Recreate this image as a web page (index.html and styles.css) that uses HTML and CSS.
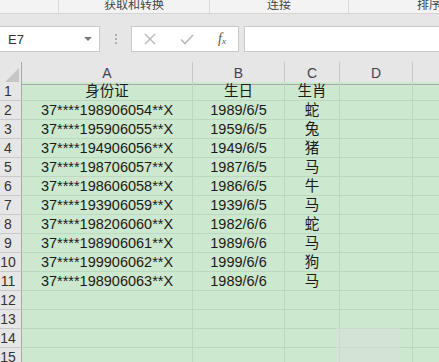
FILE: index.html
```html
<!DOCTYPE html>
<html lang="zh-CN">
<head>
    <meta charset="UTF-8">
    <title>身份证 - 生肖</title>
    <link rel="stylesheet" href="styles.css">
</head>
<body>
    <div class="ribbon">
        <div class="group g1"></div>
        <div class="group g2"><span>获取和转换</span></div>
        <div class="group g3"><span>连接</span></div>
        <div class="group g4"><span>排序</span></div>
    </div>

    <div class="formula-bar">
        <div class="name-box">
            <span>E7</span>
            <svg class="caret" width="8" height="5" viewBox="0 0 8 5"><path d="M0 0h8L4 4z" fill="#7a7a7a"/></svg>
        </div>
        <div class="grip">
            <i></i><i></i><i></i>
        </div>
        <div class="fx-box">
            <svg width="12" height="12" viewBox="0 0 12 12"><path d="M1 1L11 11M11 1L1 11" stroke="#b8b8b8" stroke-width="1.4" fill="none"/></svg>
            <svg width="14" height="11" viewBox="0 0 14 11"><path d="M1 5.5L5 9.5L13 1" stroke="#b8b8b8" stroke-width="1.6" fill="none"/></svg>
            <span class="fx">f<sub>x</sub></span>
        </div>
        <div class="formula-input"></div>
    </div>

    <div class="sheet" id="sheet">
        <div class="row head">
            <div class="corner"><svg width="14" height="14" viewBox="0 0 14 14"><path d="M14 0V14H0z" fill="#c6c6c6"/></svg></div>
            <div class="col">A</div>
            <div class="col">B</div>
            <div class="col">C</div>
            <div class="col">D</div>
            <div class="col"></div>
        </div>
    </div>

    <div class="watermark"></div>

    <script>
        const rows = [
            ["身份证", "生日", "生肖"],
            ["37****198906054**X", "1989/6/5", "蛇"],
            ["37****195906055**X", "1959/6/5", "兔"],
            ["37****194906056**X", "1949/6/5", "猪"],
            ["37****198706057**X", "1987/6/5", "马"],
            ["37****198606058**X", "1986/6/5", "牛"],
            ["37****193906059**X", "1939/6/5", "马"],
            ["37****198206060**X", "1982/6/6", "蛇"],
            ["37****198906061**X", "1989/6/6", "马"],
            ["37****199906062**X", "1999/6/6", "狗"],
            ["37****198906063**X", "1989/6/6", "马"],
            [], [], [], []
        ];

        const sheet = document.getElementById('sheet');
        rows.forEach((data, i) => {
            const row = document.createElement('div');
            row.className = 'row';
            const num = document.createElement('div');
            num.className = 'num';
            num.textContent = i + 1;
            row.appendChild(num);
            for (let c = 0; c < 5; c++) {
                const cell = document.createElement('div');
                cell.className = 'cell';
                cell.textContent = data[c] || '';
                row.appendChild(cell);
            }
            sheet.appendChild(row);
        });
    </script>
</body>
</html>
```

FILE: styles.css
```css
body {
    margin: 0;
    width: 439px;
    height: 362px;
    overflow: hidden;
    background-color: #e6e6e6;
    font-family: 'Liberation Sans', 'Noto Sans CJK SC', sans-serif;
    position: relative;
}

.ribbon {
    display: flex;
    height: 14px;
    background-color: #f3f3f3;
    border-bottom: 1px solid #d6d6d6;
    box-sizing: border-box;
    overflow: hidden;
}

.group {
    border-right: 1px solid #d9d9d9;
    text-align: center;
    flex-shrink: 0;
}

.group span {
    display: block;
    margin-top: -4px;
    font-family: 'Noto Sans CJK SC', sans-serif;
    font-size: 12px;
    line-height: 16px;
    color: #444;
}

.g1 { width: 58px; }
.g2 { width: 150px; }
.g3 { width: 138px; }
.g4 { width: 160px; text-align: left; padding-left: 68px; }

.formula-bar {
    display: flex;
    align-items: flex-start;
    height: 48px;
    padding-top: 12px;
    box-sizing: border-box;
}

.name-box,
.fx-box,
.formula-input {
    height: 26px;
    background-color: #fff;
    border: 1px solid #c9c9c9;
    box-sizing: border-box;
}

.name-box {
    width: 101px;
    margin-left: -1px;
    display: flex;
    align-items: center;
    justify-content: space-between;
    padding: 0 7px 0 8px;
    font-size: 13px;
    color: #333;
}

.caret {
    margin-top: 1px;
}

.grip {
    width: 31px;
    height: 26px;
    display: flex;
    flex-direction: column;
    align-items: center;
    justify-content: center;
    gap: 2px;
}

.grip i {
    width: 2px;
    height: 2px;
    background-color: #b0b0b0;
}

.fx-box {
    width: 108px;
    display: flex;
    align-items: center;
    justify-content: space-between;
    padding: 0 12px 0 12px;
}

.fx {
    font-family: 'Liberation Serif', serif;
    font-style: italic;
    font-size: 14px;
    color: #555;
}

.fx sub {
    font-size: 9px;
    vertical-align: -1px;
}

.formula-input {
    flex: 1;
    margin-left: 5px;
    margin-right: -2px;
}

.sheet {
    background-color: #cce8cf;
}

.row {
    display: grid;
    grid-template-columns: 22px 171px 92px 55px 73px 40px;
    height: 19px;
}

.row > div {
    box-sizing: border-box;
    border-right: 1px solid #bcd8c0;
    border-bottom: 1px solid #bcd8c0;
    text-align: center;
    font-size: 14.5px;
    line-height: 18px;
    color: #1a1a1a;
    white-space: nowrap;
}

.row.head {
    height: 20px;
    background-color: #e6e6e6;
}

.row.head > div {
    border-right: 1px solid #c8c8c8;
    border-bottom: 1px solid #a9a9a9;
    font-size: 14px;
    line-height: 22px;
    color: #444;
}

.row.head > .corner {
    border-right: 1px solid #a9a9a9;
    display: flex;
    align-items: flex-end;
    justify-content: flex-end;
    padding: 0 2px 2px 0;
}

.row > .num {
    background-color: #e6e6e6;
    border-right: 1px solid #a9a9a9;
    border-bottom: 1px solid #c9c9c9;
    padding-right: 5px;
    font-size: 14px;
    color: #333;
    overflow: visible;
}

.watermark {
    position: absolute;
    left: 336px;
    top: 328px;
    width: 64px;
    height: 34px;
    background-color: rgba(220, 222, 220, 0.45);
}
```
